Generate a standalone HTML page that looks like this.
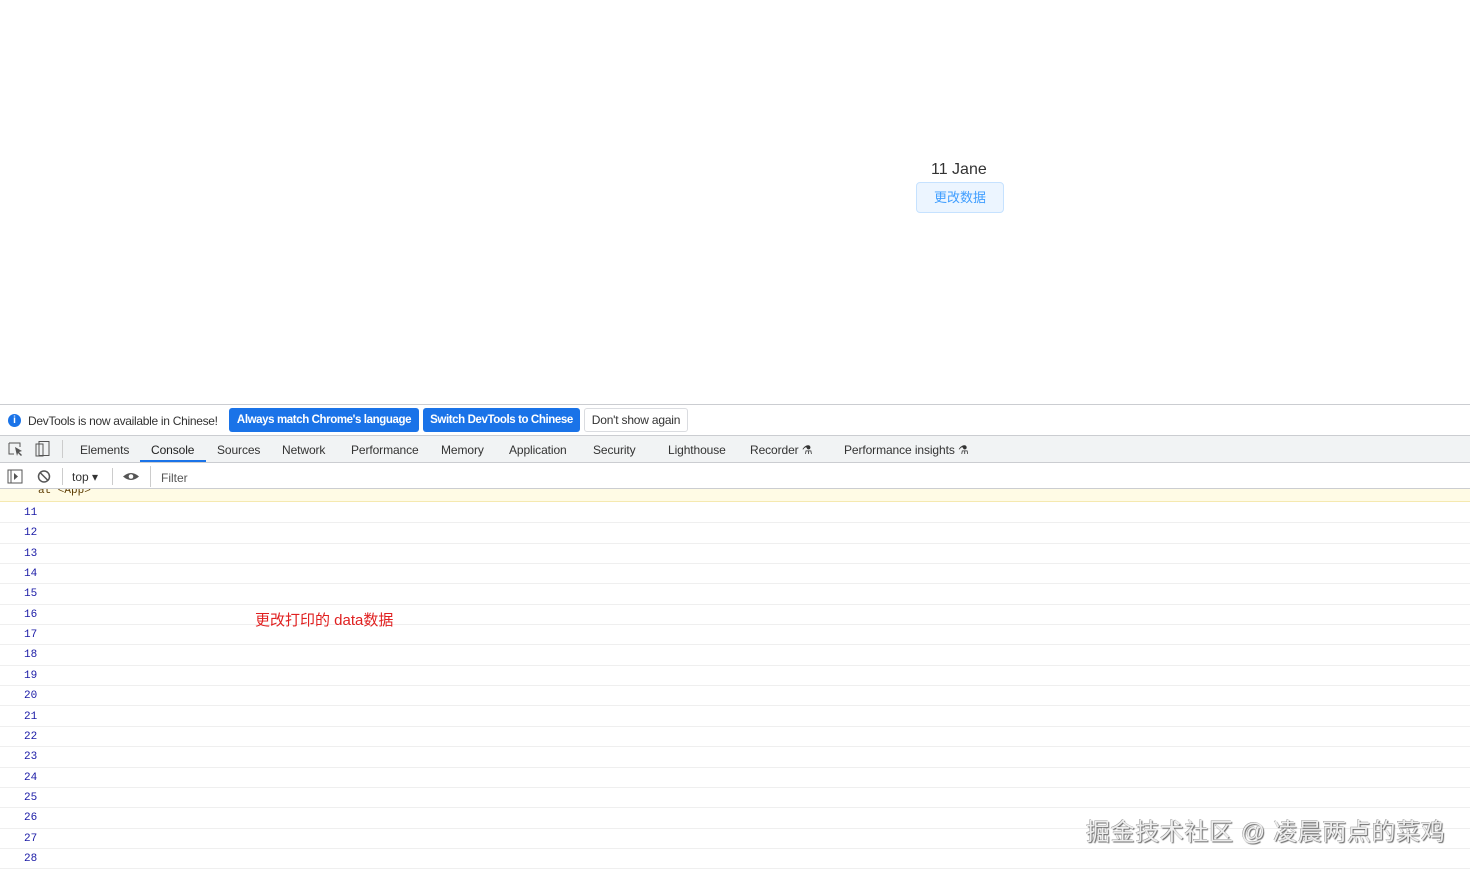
<!DOCTYPE html>
<html><head><meta charset="utf-8"><style>
*{margin:0;padding:0;box-sizing:border-box}
body{width:1470px;height:867px;overflow:hidden;background:#fff;font-family:"Liberation Sans","Noto Sans CJK SC",sans-serif;position:relative}
.abs{position:absolute;white-space:nowrap}
.tab{position:absolute;top:443px;font-size:12px;color:#333;letter-spacing:-0.1px;white-space:nowrap}
.row{position:absolute;left:0;width:1470px;height:20.35px;border-bottom:1px solid #efefef;font-family:"Liberation Mono",monospace;font-size:11px;color:#1a1aa6}
.row span{position:absolute;left:24px;top:4px}
.btn{position:absolute;top:408px;height:24px;background:#1a73e8;border-radius:3px;color:#fff;font-size:11.5px;font-weight:bold;line-height:24px;text-align:center;letter-spacing:-0.4px;white-space:nowrap}
</style></head><body>
<div class="abs" style="left:931px;top:161px;font-size:16px;color:#333">11 Jane</div>
<div class="abs" style="left:916px;top:182px;width:88px;height:31px;border:1px solid #c6e2ff;background:#ecf5ff;border-radius:4px;color:#409eff;font-size:13px;text-align:center;line-height:29px">更改数据</div>

<div class="abs" style="left:0;top:404px;width:1470px;height:1px;background:#cbcdd1"></div>
<div class="abs" style="left:8px;top:414px;width:13px;height:13px;border-radius:50%;background:#1a73e8;color:#fff;font-size:10px;text-align:center;line-height:13px;font-weight:bold">i</div>
<div class="abs" style="left:28px;top:414px;font-size:12px;color:#333;letter-spacing:-0.3px">DevTools is now available in Chinese!</div>
<div class="btn" style="left:229px;width:190px">Always match Chrome's language</div>
<div class="btn" style="left:423px;width:157px">Switch DevTools to Chinese</div>
<div class="abs" style="left:584px;top:408px;width:104px;height:24px;border:1px solid #dadce0;border-radius:3px;color:#333;font-size:12px;line-height:22px;text-align:center;letter-spacing:-0.2px">Don't show again</div>

<div class="abs" style="left:0;top:435px;width:1470px;height:28px;background:#f1f3f4;border-top:1px solid #cbcdd1;border-bottom:1px solid #cbcdd1"></div>
<svg class="abs" style="left:8px;top:441px" width="44" height="16"><path d="M1 2h11v4M1 2v11h5" fill="none" stroke="#555"/><path d="M7 6l7 4-3 1 3 3-1 1-3-3-1 3z" fill="#555"/><rect x="28" y="3" width="7" height="12" fill="none" stroke="#555"/><rect x="31" y="0.5" width="10" height="14" fill="none" stroke="#555"/></svg>
<div class="abs" style="left:62px;top:440px;width:1px;height:18px;background:#ccc"></div>
<div class="tab" style="left:80px">Elements</div>
<div class="tab" style="left:151px;color:#222">Console</div>
<div class="abs" style="left:140px;top:460px;width:66px;height:2px;background:#1a73e8"></div>
<div class="tab" style="left:217px">Sources</div>
<div class="tab" style="left:282px">Network</div>
<div class="tab" style="left:351px">Performance</div>
<div class="tab" style="left:441px">Memory</div>
<div class="tab" style="left:509px">Application</div>
<div class="tab" style="left:593px">Security</div>
<div class="tab" style="left:668px">Lighthouse</div>
<div class="tab" style="left:750px">Recorder ⚗</div>
<div class="tab" style="left:844px">Performance insights ⚗</div>

<div class="abs" style="left:0;top:463px;width:1470px;height:26px;background:#fff;border-bottom:1px solid #cbcdd1"></div>
<svg class="abs" style="left:7px;top:469px" width="140" height="16"><rect x="1" y="1" width="14" height="13" fill="none" stroke="#555"/><path d="M4 1v13" stroke="#555"/><path d="M7 4l4 3.5-4 3.5z" fill="#555"/><circle cx="37" cy="7.5" r="5.5" fill="none" stroke="#555" stroke-width="1.5"/><path d="M33 3.5l8 8" stroke="#555" stroke-width="1.5"/><path d="M116 7.5q8-7 16 0q-8 7-16 0z" fill="#555"/><circle cx="124" cy="7.5" r="2.3" fill="#fff"/></svg>
<div class="abs" style="left:62px;top:468px;width:1px;height:17px;background:#ccc"></div>
<div class="abs" style="left:72px;top:470px;font-size:12px;color:#333">top ▾</div>
<div class="abs" style="left:112px;top:468px;width:1px;height:17px;background:#ccc"></div>
<div class="abs" style="left:150px;top:466px;width:1px;height:21px;background:#ccc"></div>
<div class="abs" style="left:161px;top:471px;font-size:12px;color:#555">Filter</div>

<div class="abs" style="left:0;top:489px;width:1470px;height:13px;background:#fffbe5;border-bottom:1px solid #f5e9b0;overflow:hidden"><span style="position:absolute;left:38px;top:-4px;font-family:'Liberation Mono',monospace;font-size:11px;color:#5c3b00">at &lt;App&gt;</span></div>

<div class="row" style="top:503px"><span>11</span></div>
<div class="row" style="top:523.35px"><span>12</span></div>
<div class="row" style="top:543.7px"><span>13</span></div>
<div class="row" style="top:564.05px"><span>14</span></div>
<div class="row" style="top:584.4px"><span>15</span></div>
<div class="row" style="top:604.75px"><span>16</span></div>
<div class="row" style="top:625.1px"><span>17</span></div>
<div class="row" style="top:645.45px"><span>18</span></div>
<div class="row" style="top:665.8px"><span>19</span></div>
<div class="row" style="top:686.15px"><span>20</span></div>
<div class="row" style="top:706.5px"><span>21</span></div>
<div class="row" style="top:726.85px"><span>22</span></div>
<div class="row" style="top:747.2px"><span>23</span></div>
<div class="row" style="top:767.55px"><span>24</span></div>
<div class="row" style="top:787.9px"><span>25</span></div>
<div class="row" style="top:808.25px"><span>26</span></div>
<div class="row" style="top:828.6px"><span>27</span></div>
<div class="row" style="top:848.95px"><span>28</span></div>

<div class="abs" style="left:255px;top:609px;font-size:15px;color:#e02020">更改打印的 data数据</div>
<div class="abs" style="left:1086px;top:812px;font-size:24px;color:#eee;text-shadow:1px 1px 1px #666,-0.5px -0.5px 0 #999;letter-spacing:0.6px">掘金技术社区 @ 凌晨两点的菜鸡</div>
</body></html>
